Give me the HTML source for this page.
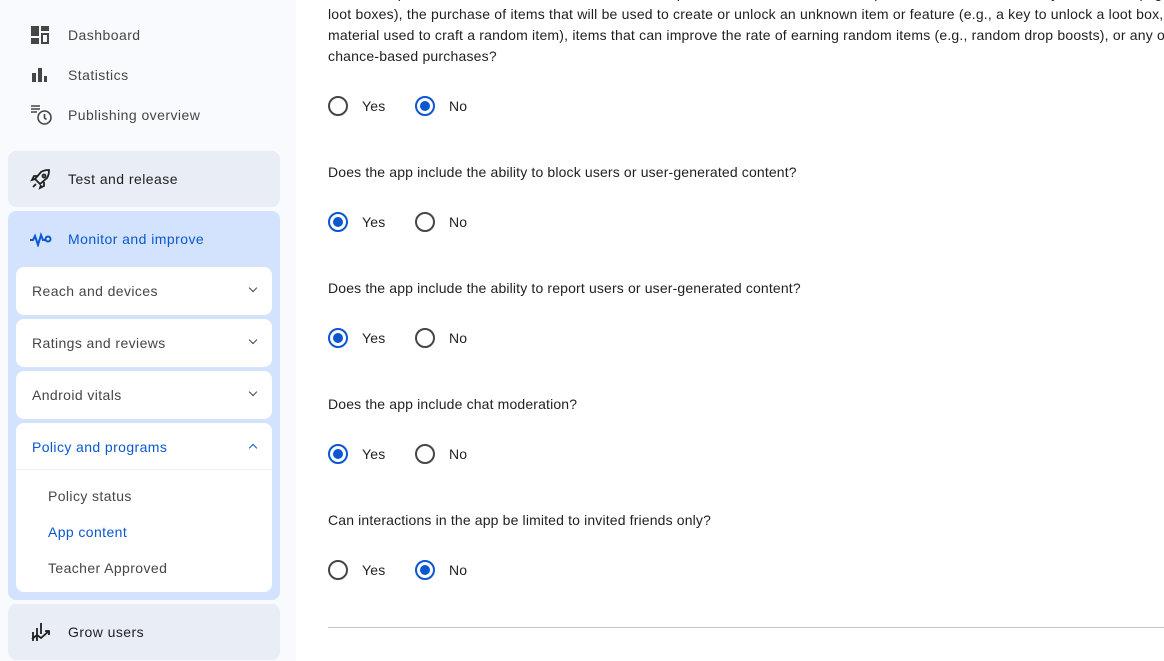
<!DOCTYPE html>
<html><head><meta charset="utf-8"><style>
*{margin:0;padding:0;box-sizing:border-box}
body{width:1164px;height:661px;overflow:hidden;background:#fff;font-family:"Liberation Sans",Arial,sans-serif;position:relative;color:#1f1f1f;letter-spacing:0.2px}
.side{position:absolute;left:0;top:0;width:296px;height:661px;background:#f8fafd}
.it{position:absolute;left:30px;font-size:14px;color:#444746;display:flex;align-items:center;height:20px}
.it span{position:absolute;left:38px;white-space:nowrap;letter-spacing:0.45px}
.card{position:absolute;border-radius:8px}
.lbl{position:absolute;font-size:14px;white-space:nowrap;letter-spacing:0.4px}
.chev{position:absolute;right:16px;width:6px;height:6px;border-right:1.5px solid #444;border-bottom:1.5px solid #444;transform:rotate(45deg)}
.q{position:absolute;left:328px;font-size:14px;color:#1f1f1f;white-space:nowrap;letter-spacing:0.15px}
.r{position:absolute;width:20px;height:20px;border-radius:50%;border:2px solid #444746}
.r.on{border-color:#0b57d0}
.r.on::after{content:"";position:absolute;left:3px;top:3px;width:10px;height:10px;border-radius:50%;background:#0b57d0}
.t{position:absolute;font-size:14px;color:#1f1f1f}
</style></head><body>
<div class="side">
 <div class="it" style="top:25px"><svg width="20" height="20" viewBox="0 0 20 20" fill="#444746"><rect x="1" y="1" width="8" height="10"/><rect x="11" y="1" width="8" height="5"/><rect x="1" y="13" width="8" height="6"/><path d="M11 8h8v11h-8z M13 10v7h4v-7z" fill-rule="evenodd"/></svg><span>Dashboard</span></div>
 <div class="it" style="top:65px"><svg width="20" height="20" viewBox="0 0 20 20" fill="#444746"><rect x="2" y="8" width="4" height="9"/><rect x="8" y="3" width="4" height="14"/><rect x="14" y="11" width="3" height="6"/></svg><span>Statistics</span></div>
 <div class="it" style="top:105px"><svg width="24" height="24" viewBox="0 0 24 24" fill="none" stroke="#444746" stroke-width="1.6"><path d="M1 3h9M1 6h9M1 9h6"/><circle cx="14.5" cy="14.5" r="6.5"/><path d="M14.5 11v4l2 1.5"/></svg><span>Publishing overview</span></div>
 <div class="card" style="left:8px;top:151px;width:272px;height:56px;background:#e9eef6"></div>
 <div class="it" style="top:169px;color:#1f1f1f"><svg width="22" height="22" viewBox="0 0 22 22" fill="none" stroke="#1f1f1f" stroke-width="1.8"><path d="M8 14l-3-3 6-7c3-2 6-2 8-2 0 2 0 5-2 8l-7 6z"/><circle cx="14" cy="8" r="1.5"/><path d="M5 11l-3 1 2-4h4M11 17l-1 3 4-2v-4M6 16l-3 3"/></svg><span>Test and release</span></div>
 <div class="card" style="left:8px;top:211px;width:272px;height:389px;background:#d3e3fd"></div>
 <div class="it" style="top:229px;color:#0b57d0"><svg width="22" height="16" viewBox="0 0 22 16" fill="none" stroke="#0b57d0" stroke-width="2"><path d="M0 9h3l2-4 3 9 3-10 2 5h2"/><circle cx="18" cy="8" r="2.5"/></svg><span>Monitor and improve</span></div>
 <div class="card" style="left:16px;top:267px;width:256px;height:48px;background:#fff"><div class="lbl" style="left:16px;top:16px;color:#444746">Reach and devices</div><div class="chev" style="top:18px"></div></div>
 <div class="card" style="left:16px;top:319px;width:256px;height:48px;background:#fff"><div class="lbl" style="left:16px;top:16px;color:#444746">Ratings and reviews</div><div class="chev" style="top:18px"></div></div>
 <div class="card" style="left:16px;top:371px;width:256px;height:48px;background:#fff"><div class="lbl" style="left:16px;top:16px;color:#444746">Android vitals</div><div class="chev" style="top:18px"></div></div>
 <div class="card" style="left:16px;top:423px;width:256px;height:169px;background:#fff">
  <div class="lbl" style="left:16px;top:16px;color:#0b57d0">Policy and programs</div><div class="chev" style="top:22px;transform:rotate(225deg);border-color:#0b57d0"></div>
  <div style="position:absolute;left:0;right:0;top:46px;border-top:1px solid #f0f2f5"></div>
  <div class="lbl" style="left:32px;top:65px;color:#444746">Policy status</div>
  <div class="lbl" style="left:32px;top:101px;color:#0b57d0">App content</div>
  <div class="lbl" style="left:32px;top:137px;color:#444746">Teacher Approved</div>
 </div>
 <div class="card" style="left:8px;top:604px;width:272px;height:56px;background:#e9eef6"></div>
 <div class="it" style="top:622px;color:#1f1f1f"><svg width="22" height="22" viewBox="0 0 22 22" fill="none" stroke="#1f1f1f" stroke-width="1.8"><path d="M3 20v-9M7 20v-13M11 13v-11M2 18l5-4 4 3 8-7M15 10h4v4"/></svg><span>Grow users</span></div>
</div>
<div style="position:absolute;left:328px;top:-17px;font-size:14px;line-height:21px;color:#1f1f1f;white-space:nowrap;letter-spacing:0.2px">Can these purchases include random items where the purchaser doesn't know what specific items or features they will receive (e.g.<br>loot boxes), the purchase of items that will be used to create or unlock an unknown item or feature (e.g., a key to unlock a loot box,<br>material used to craft a random item), items that can improve the rate of earning random items (e.g., random drop boosts), or any o<br>chance-based purchases?</div>

<div class="r" style="left:328px;top:96px"></div><div class="t" style="left:362px;top:98px">Yes</div><div class="r on" style="left:415px;top:96px"></div><div class="t" style="left:449px;top:98px">No</div>

<div class="q" style="top:164px">Does the app include the ability to block users or user-generated content?</div>
<div class="r on" style="left:328px;top:212px"></div><div class="t" style="left:362px;top:214px">Yes</div><div class="r" style="left:415px;top:212px"></div><div class="t" style="left:449px;top:214px">No</div>

<div class="q" style="top:280px">Does the app include the ability to report users or user-generated content?</div>
<div class="r on" style="left:328px;top:328px"></div><div class="t" style="left:362px;top:330px">Yes</div><div class="r" style="left:415px;top:328px"></div><div class="t" style="left:449px;top:330px">No</div>

<div class="q" style="top:396px">Does the app include chat moderation?</div>
<div class="r on" style="left:328px;top:444px"></div><div class="t" style="left:362px;top:446px">Yes</div><div class="r" style="left:415px;top:444px"></div><div class="t" style="left:449px;top:446px">No</div>

<div class="q" style="top:512px">Can interactions in the app be limited to invited friends only?</div>
<div class="r" style="left:328px;top:560px"></div><div class="t" style="left:362px;top:562px">Yes</div><div class="r on" style="left:415px;top:560px"></div><div class="t" style="left:449px;top:562px">No</div>

<div style="position:absolute;left:328px;right:0;top:627px;border-top:1px solid #c4c7c5"></div>
</body></html>
